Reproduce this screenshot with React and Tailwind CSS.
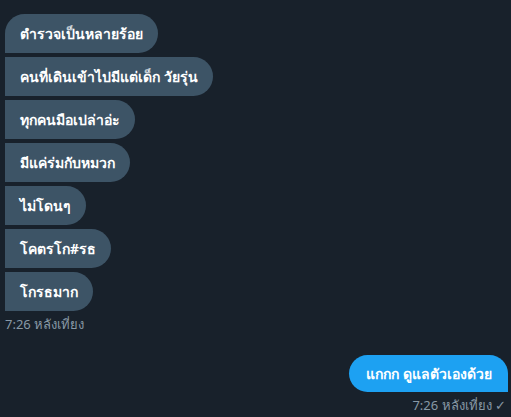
import React from 'react';

const received = [
  'ตำรวจเป็นหลายร้อย',
  'คนที่เดินเข้าไปมีแต่เด็ก วัยรุ่น',
  'ทุกคนมือเปล่าอ่ะ',
  'มีแค่ร่มกับหมวก',
  'ไม่โดนๆ',
  'โคตรโก#รธ',
  'โกรธมาก',
];

const App = () => {
  return (
    <div
      className="w-[511px] h-[417px] bg-[#18212b] overflow-hidden flex flex-col pt-[14px] pl-[5px] pr-[3px]"
      style={{ fontFamily: '"Noto Sans", "Liberation Sans", sans-serif' }}
    >
      {/* ข้อความที่ได้รับ */}
      <div className="flex flex-col items-start gap-[4px]">
        {received.map((msg, idx) => {
          const isFirst = idx === 0;
          return (
            <div
              key={idx}
              className={`bg-[#3d5466] text-white text-[14px] font-bold leading-[21px] py-[9px] pl-[15px] pr-[15px] rounded-r-[20px] whitespace-nowrap ${isFirst ? 'rounded-tl-[20px]' : ''}`}
            >
              {msg}
            </div>
          );
        })}
      </div>
      <div className="text-[#8899a6] text-[13px] leading-[16px] mt-[5px]">
        7:26 หลังเที่ยง
      </div>

      {/* ข้อความที่ส่ง */}
      <div className="flex flex-col items-end mt-[23px]">
        <div className="bg-[#1da1f2] text-white text-[14px] font-bold leading-[21px] py-[8px] pl-[17px] pr-[16px] rounded-t-[20px] rounded-bl-[20px] whitespace-nowrap">
          แกกก ดูแลตัวเองด้วย
        </div>
        <div className="text-[#8899a6] text-[13px] leading-[16px] mt-[5px] pr-[2px]">
          7:26 หลังเที่ยง ✓
        </div>
      </div>
    </div>
  );
};

export default App;
